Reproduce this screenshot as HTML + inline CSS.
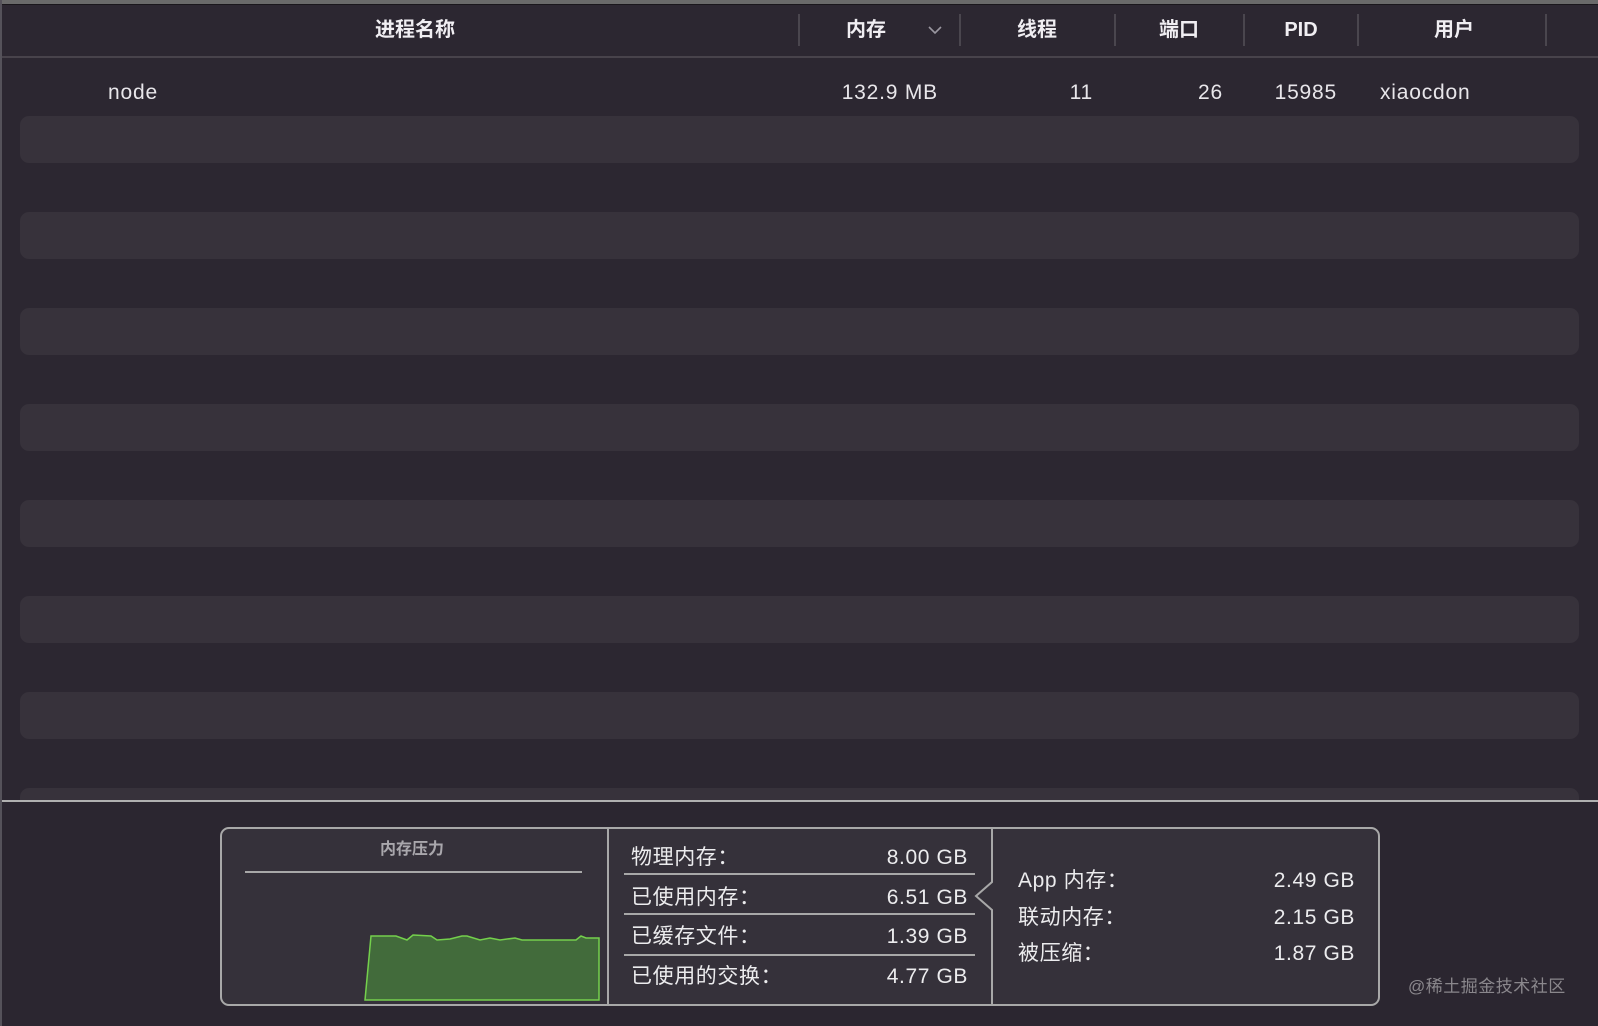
<!DOCTYPE html>
<html><head><meta charset="utf-8"><style>
*{margin:0;padding:0;box-sizing:border-box}
body{width:1598px;height:1026px;background:#2c2731;position:relative;overflow:hidden;font-family:"Liberation Sans","Noto Sans CJK SC",sans-serif;color:#e6e4e8}
.a{position:absolute;white-space:nowrap}
.top{left:0;top:0;width:1598px;height:4px;background:#6a6a6a}
.top2{left:0;top:4px;width:1598px;height:1px;background:#1a171c}
.lb{left:0;top:0;width:2px;height:1026px;background:#55525a}
.h{top:17px;font-size:20px;font-weight:bold;color:#f0eef2;line-height:26px;transform:translateX(-50%)}
.sep{top:14px;width:2px;height:32px;background:#4a464e}
.hl{left:0;top:56px;width:1598px;height:2px;background:#48434b}
.r{top:80px;font-size:21px;letter-spacing:0.8px;line-height:26px;color:#e8e6ea}
.st{left:20px;width:1559px;height:47px;border-radius:9px;background:#37323b}
.div{left:0;top:800px;width:1598px;height:2px;background:#b0b0b0}
.bot{left:0;top:802px;width:1598px;height:224px;background:#2b2630}
.box{left:220px;top:827px;width:1160px;height:179px;border:2px solid #a8a8a8;border-radius:9px;background:#35313a}
.t{font-size:21px;letter-spacing:0.6px;line-height:26px;color:#ececee}
.ln{height:2px;background:#a8a8a8}
</style></head><body>
<div class="a top"></div><div class="a top2"></div>
<div class="a h" style="left:415px">进程名称</div>
<div class="a sep" style="left:798px"></div>
<div class="a h" style="left:866px">内存</div>
<svg class="a" style="left:928px;top:25px" width="14" height="10"><path d="M1 2 L7 8 L13 2" stroke="#9a97a0" stroke-width="1.6" fill="none"/></svg>
<div class="a sep" style="left:959px"></div>
<div class="a h" style="left:1037px">线程</div>
<div class="a sep" style="left:1114px"></div>
<div class="a h" style="left:1179px">端口</div>
<div class="a sep" style="left:1243px"></div>
<div class="a h" style="left:1301px">PID</div>
<div class="a sep" style="left:1357px"></div>
<div class="a h" style="left:1454px">用户</div>
<div class="a sep" style="left:1545px"></div>
<div class="a hl"></div>
<div class="a r" style="left:108px">node</div>
<div class="a r" style="right:660px">132.9 MB</div>
<div class="a r" style="right:505px">11</div>
<div class="a r" style="right:375px">26</div>
<div class="a r" style="right:261px">15985</div>
<div class="a r" style="left:1380px">xiaocdon</div>
<div class="a st" style="top:116px"></div>
<div class="a st" style="top:212px"></div>
<div class="a st" style="top:308px"></div>
<div class="a st" style="top:404px"></div>
<div class="a st" style="top:500px"></div>
<div class="a st" style="top:596px"></div>
<div class="a st" style="top:692px"></div>
<div class="a st" style="top:788px"></div>
<div class="a bot"></div>
<div class="a div"></div>
<div class="a lb"></div>
<div class="a box"></div>
<div class="a" style="left:607px;top:829px;width:2px;height:175px;background:#a8a8a8"></div>
<svg class="a" style="left:970px;top:829px" width="26" height="176"><path d="M22 0 V53 L6 67 L22 81 V176" stroke="#a8a8a8" stroke-width="2" fill="none"/></svg>
<div class="a" style="left:412px;top:839px;transform:translateX(-50%);font-size:16px;font-weight:bold;color:#a9a7ac;line-height:22px">内存压力</div>
<div class="a ln" style="left:245px;top:871px;width:337px"></div>
<svg class="a" style="left:0;top:0" width="1598" height="1026"><path d="M365 1000 L371 936 L396 936 L407 940 L413 935 L431 936 L437 940 L450 939 L462 936 L467 936 L480 940 L490 938 L500 940 L515 938 L522 940 L576 940 L581 936 L586 938 L599 938 L599 1000 Z" fill="#426b3b" stroke="#74d04c" stroke-width="1.5"/></svg>
<div class="a t" style="left:631px;top:845px">物理内存：</div><div class="a t" style="right:630px;top:845px">8.00 GB</div>
<div class="a ln" style="left:624px;top:873px;width:351px"></div>
<div class="a t" style="left:631px;top:885px">已使用内存：</div><div class="a t" style="right:630px;top:885px">6.51 GB</div>
<div class="a ln" style="left:624px;top:913px;width:351px"></div>
<div class="a t" style="left:631px;top:924px">已缓存文件：</div><div class="a t" style="right:630px;top:924px">1.39 GB</div>
<div class="a ln" style="left:624px;top:954px;width:351px"></div>
<div class="a t" style="left:631px;top:964px">已使用的交换：</div><div class="a t" style="right:630px;top:964px">4.77 GB</div>
<div class="a t" style="left:1018px;top:868px">App 内存：</div><div class="a t" style="right:243px;top:868px">2.49 GB</div>
<div class="a t" style="left:1018px;top:905px">联动内存：</div><div class="a t" style="right:243px;top:905px">2.15 GB</div>
<div class="a t" style="left:1018px;top:941px">被压缩：</div><div class="a t" style="right:243px;top:941px">1.87 GB</div>
<div class="a" style="left:1408px;top:976px;font-size:17px;letter-spacing:0.5px;color:#8a878c;line-height:22px">@稀土掘金技术社区</div>
</body></html>
